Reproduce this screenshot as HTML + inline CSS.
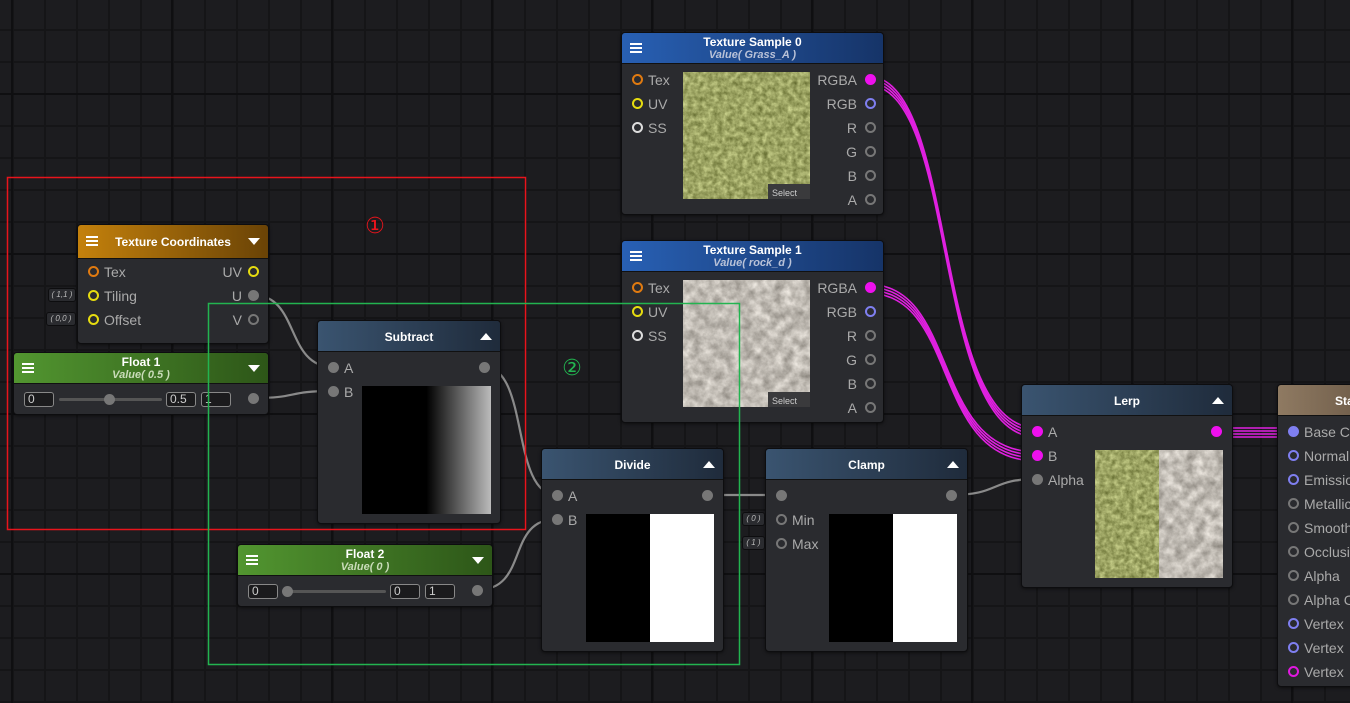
<!DOCTYPE html>
<html><head><meta charset="utf-8"><style>
*{box-sizing:border-box;margin:0;padding:0}
body{width:1350px;height:703px;overflow:hidden;position:relative;font-family:"Liberation Sans",sans-serif;
background-color:#1c1c1f;
background-image:
linear-gradient(90deg,#0f0f11 0,#0f0f11 2px,transparent 2px),
linear-gradient(0deg,#0f0f11 0,#0f0f11 2px,transparent 2px),
linear-gradient(90deg,#151517 0,#151517 2px,transparent 2px),
linear-gradient(0deg,#151517 0,#151517 2px,transparent 2px);
background-size:160px 160px,160px 160px,32px 32px,32px 32px;
background-position:171px 0,0 95px,12px 0,0 95px;}
.n{position:absolute;background:#2a2b2f;border:1px solid #0d0d0f;border-radius:4px;overflow:hidden;box-shadow:0 1px 3px #0008}
.h{height:31px;color:#fff;font-weight:bold;font-size:12px;text-align:center;position:relative;border-bottom:1px solid #111;white-space:nowrap}
.h .t{padding-top:9px}
.h .t2{padding-top:3px;line-height:13px}
.h .t2 i{display:block;font-weight:bold;font-size:11px;color:#b9c2d8}
.blu{background:linear-gradient(90deg,#2860b4,#163468)}
.dbl{background:linear-gradient(90deg,#3a5470,#1f2b3b)}
.grn{background:linear-gradient(90deg,#529630,#2d5618)}
.grn .t2 i{color:#c9dcb9}
.org{background:linear-gradient(90deg,#c4810c,#6a4306)}
.brn{background:linear-gradient(90deg,#8f7a62,#6e5c49)}
.mn{position:absolute;left:8px;top:10px;width:12px;height:10px;border-top:2px solid #fff;border-bottom:2px solid #fff}
.mn:after{content:"";position:absolute;left:0;right:0;top:2px;height:2px;background:#fff}
.up,.dn{position:absolute;right:8px;top:12px;width:0;height:0;border-left:6px solid transparent;border-right:6px solid transparent}
.up{border-bottom:7px solid #fff}
.dn{border-top:7px solid #fff}
.l{position:absolute;color:#aaa;font-size:14px;line-height:16px;white-space:nowrap}
.p{position:absolute;width:11px;height:11px;border-radius:50%;border:2px solid #777}
.f{background:#777;border-color:#777}
.o{border-color:#e07a10}.y{border-color:#e6dc10}.w{border-color:#ddd}.b{border-color:#7f7ff0}.m{border-color:#e018e0}
.mf{background:#ee10ee;border-color:#ee10ee}.bf{background:#7f7ff0;border-color:#7f7ff0}
.in{position:absolute;height:15px;border:1px solid #888;border-radius:3px;background:#1b1b1d;color:#ccc;font-size:12px;line-height:13px;padding-left:3px}
.tag{position:absolute;height:14px;border:1px solid #0d0d0f;border-radius:3px;background:#2a2b2f;color:#bbb;font-size:8px;font-style:italic;line-height:12px;text-align:center}
.abs{position:absolute}
</style></head><body>
<svg class="abs" style="left:0;top:0" width="1350" height="703">
<g fill="none" stroke="#8a8a8a" stroke-width="2.2">
<path d="M253 295 C300 295 285 367 333 367"/>
<path d="M253 398 C300 398 285 391 333 391"/>
<path d="M484 367 C530 367 510 495 557 495"/>
<path d="M477 590 C530 590 505 519 557 519"/>
<path d="M707 495 L781 495"/>
<path d="M951 495 C1000 495 990 479 1037 479"/>
</g>
<g fill="none" stroke="#e020e0" stroke-width="1.6">
<path d="M867 76 C960 76 930 428 1037 428"/><path d="M867 79 C960 79 930 431 1037 431"/><path d="M867 82 C960 82 930 434 1037 434"/><path d="M867 85 C960 85 930 437 1037 437"/>
<path d="M867 284 C960 284 930 452 1037 452"/><path d="M867 287 C960 287 930 455 1037 455"/><path d="M867 290 C960 290 930 458 1037 458"/><path d="M867 293 C960 293 930 461 1037 461"/>
<path d="M1216 428 L1293 428"/><path d="M1216 431 L1293 431"/><path d="M1216 434 L1293 434"/><path d="M1216 437 L1293 437"/>
</g>
<defs>
<filter id="grass" x="0" y="0" width="100%" height="100%" color-interpolation-filters="sRGB"><feTurbulence type="fractalNoise" baseFrequency="0.2" numOctaves="4" seed="3"/><feColorMatrix values="0.5 0 0 0 0.36  0.5 0 0 0 0.39  0.45 0 0 0 0.16  0 0 0 0 1"/></filter>
<filter id="rock" x="0" y="0" width="100%" height="100%" color-interpolation-filters="sRGB"><feTurbulence type="fractalNoise" baseFrequency="0.1" numOctaves="4" seed="7"/><feColorMatrix values="0.5 0 0 0 0.5  0.5 0 0 0 0.48  0.5 0 0 0 0.45  0 0 0 0 1"/></filter>
</defs>
</svg>

<!-- Texture Sample 0 -->
<div class="n" style="left:621px;top:32px;width:263px;height:183px">
<div class="h blu"><div class="mn"></div><div class="t2">Texture Sample 0<i>Value( Grass_A )</i></div></div>
<div class="p o" style="left:10px;top:41px"></div><div class="l" style="left:26px;top:39px">Tex</div>
<div class="p y" style="left:10px;top:65px"></div><div class="l" style="left:26px;top:63px">UV</div>
<div class="p w" style="left:10px;top:89px"></div><div class="l" style="left:26px;top:87px">SS</div>
<svg class="abs" style="left:61px;top:39px" width="127" height="127"><rect width="127" height="127" filter="url(#grass)"/><rect x="85" y="112" width="42" height="15" fill="#3a3a3c"/><text x="89" y="124" font-size="9" fill="#ccc" font-family="Liberation Sans">Select</text></svg>
<div class="l" style="right:26px;top:39px">RGBA</div><div class="p mf" style="right:7px;top:41px"></div>
<div class="l" style="right:26px;top:63px">RGB</div><div class="p b" style="right:7px;top:65px"></div>
<div class="l" style="right:26px;top:87px">R</div><div class="p" style="right:7px;top:89px"></div>
<div class="l" style="right:26px;top:111px">G</div><div class="p" style="right:7px;top:113px"></div>
<div class="l" style="right:26px;top:135px">B</div><div class="p" style="right:7px;top:137px"></div>
<div class="l" style="right:26px;top:159px">A</div><div class="p" style="right:7px;top:161px"></div>
</div>

<!-- Texture Sample 1 -->
<div class="n" style="left:621px;top:240px;width:263px;height:183px">
<div class="h blu"><div class="mn"></div><div class="t2">Texture Sample 1<i>Value( rock_d )</i></div></div>
<div class="p o" style="left:10px;top:41px"></div><div class="l" style="left:26px;top:39px">Tex</div>
<div class="p y" style="left:10px;top:65px"></div><div class="l" style="left:26px;top:63px">UV</div>
<div class="p w" style="left:10px;top:89px"></div><div class="l" style="left:26px;top:87px">SS</div>
<svg class="abs" style="left:61px;top:39px" width="127" height="127"><rect width="127" height="127" filter="url(#rock)"/><rect x="85" y="112" width="42" height="15" fill="#3a3a3c"/><text x="89" y="124" font-size="9" fill="#ccc" font-family="Liberation Sans">Select</text></svg>
<div class="l" style="right:26px;top:39px">RGBA</div><div class="p mf" style="right:7px;top:41px"></div>
<div class="l" style="right:26px;top:63px">RGB</div><div class="p b" style="right:7px;top:65px"></div>
<div class="l" style="right:26px;top:87px">R</div><div class="p" style="right:7px;top:89px"></div>
<div class="l" style="right:26px;top:111px">G</div><div class="p" style="right:7px;top:113px"></div>
<div class="l" style="right:26px;top:135px">B</div><div class="p" style="right:7px;top:137px"></div>
<div class="l" style="right:26px;top:159px">A</div><div class="p" style="right:7px;top:161px"></div>
</div>

<!-- Texture Coordinates -->
<div class="n" style="left:77px;top:224px;width:192px;height:120px">
<div class="h org" style="height:34px"><div class="mn" style="top:11px"></div><div class="t" style="padding-top:10px">Texture Coordinates</div><div class="dn" style="top:13px"></div></div>
<div class="p o" style="left:10px;top:41px"></div><div class="l" style="left:26px;top:39px">Tex</div>
<div class="p y" style="left:10px;top:65px"></div><div class="l" style="left:26px;top:63px">Tiling</div>
<div class="p y" style="left:10px;top:89px"></div><div class="l" style="left:26px;top:87px">Offset</div>
<div class="l" style="right:26px;top:39px">UV</div><div class="p y" style="right:9px;top:41px"></div>
<div class="l" style="right:26px;top:63px">U</div><div class="p f" style="right:9px;top:65px"></div>
<div class="l" style="right:26px;top:87px">V</div><div class="p" style="right:9px;top:89px"></div>
</div>
<div class="tag" style="left:48px;top:288px;width:28px">( 1,1 )</div>
<div class="tag" style="left:46px;top:312px;width:30px">( 0,0 )</div>

<!-- Float 1 -->
<div class="n" style="left:13px;top:352px;width:256px;height:63px">
<div class="h grn"><div class="mn"></div><div class="t2">Float 1<i>Value( 0.5 )</i></div><div class="dn"></div></div>
<div class="in" style="left:10px;top:39px;width:30px">0</div>
<div class="abs" style="left:45px;top:45px;width:103px;height:3px;background:#555;border-radius:2px"></div>
<div class="abs" style="left:90px;top:41px;width:11px;height:11px;background:#777;border-radius:50%"></div>
<div class="in" style="left:152px;top:39px;width:30px">0.5</div>
<div class="in" style="left:187px;top:39px;width:30px">1</div>
<div class="p f" style="right:9px;top:40px"></div>
</div>

<!-- Subtract -->
<div class="n" style="left:317px;top:320px;width:184px;height:204px">
<div class="h dbl"><div class="t">Subtract</div><div class="up"></div></div>
<div class="p f" style="left:10px;top:41px"></div><div class="l" style="left:26px;top:39px">A</div>
<div class="p f" style="left:10px;top:65px"></div><div class="l" style="left:26px;top:63px">B</div>
<div class="p f" style="right:10px;top:41px"></div>
<div class="abs" style="left:44px;top:65px;width:129px;height:128px;background:linear-gradient(90deg,#000 0,#000 50%,#bbb 100%)"></div>
</div>

<!-- Float 2 -->
<div class="n" style="left:237px;top:544px;width:256px;height:63px">
<div class="h grn"><div class="mn"></div><div class="t2">Float 2<i>Value( 0 )</i></div><div class="dn"></div></div>
<div class="in" style="left:10px;top:39px;width:30px">0</div>
<div class="abs" style="left:45px;top:45px;width:103px;height:3px;background:#555;border-radius:2px"></div>
<div class="abs" style="left:44px;top:41px;width:11px;height:11px;background:#777;border-radius:50%"></div>
<div class="in" style="left:152px;top:39px;width:30px">0</div>
<div class="in" style="left:187px;top:39px;width:30px">1</div>
<div class="p f" style="right:9px;top:40px"></div>
</div>

<!-- Divide -->
<div class="n" style="left:541px;top:448px;width:183px;height:204px">
<div class="h dbl"><div class="t">Divide</div><div class="up"></div></div>
<div class="p f" style="left:10px;top:41px"></div><div class="l" style="left:26px;top:39px">A</div>
<div class="p f" style="left:10px;top:65px"></div><div class="l" style="left:26px;top:63px">B</div>
<div class="p f" style="right:10px;top:41px"></div>
<div class="abs" style="left:44px;top:65px;width:128px;height:128px;background:linear-gradient(90deg,#000 50%,#fff 50%)"></div>
</div>

<!-- Clamp -->
<div class="n" style="left:765px;top:448px;width:203px;height:204px">
<div class="h dbl"><div class="t">Clamp</div><div class="up"></div></div>
<div class="p f" style="left:10px;top:41px"></div>
<div class="p" style="left:10px;top:65px"></div><div class="l" style="left:26px;top:63px">Min</div>
<div class="p" style="left:10px;top:89px"></div><div class="l" style="left:26px;top:87px">Max</div>
<div class="p f" style="right:10px;top:41px"></div>
<div class="abs" style="left:63px;top:65px;width:128px;height:128px;background:linear-gradient(90deg,#000 50%,#fff 50%)"></div>
</div>
<div class="tag" style="left:742px;top:512px;width:23px">( 0 )</div>
<div class="tag" style="left:742px;top:536px;width:23px">( 1 )</div>

<!-- Lerp -->
<div class="n" style="left:1021px;top:384px;width:212px;height:204px">
<div class="h dbl"><div class="t">Lerp</div><div class="up"></div></div>
<div class="p mf" style="left:10px;top:41px"></div><div class="l" style="left:26px;top:39px">A</div>
<div class="p mf" style="left:10px;top:65px"></div><div class="l" style="left:26px;top:63px">B</div>
<div class="p f" style="left:10px;top:89px"></div><div class="l" style="left:26px;top:87px">Alpha</div>
<div class="p mf" style="right:10px;top:41px"></div>
<svg class="abs" style="left:73px;top:65px" width="128" height="128"><rect width="64" height="128" filter="url(#grass)"/><rect x="64" width="64" height="128" filter="url(#rock)"/></svg>
</div>

<!-- Standard -->
<div class="n" style="left:1277px;top:384px;width:90px;height:303px">
<div class="h brn"><div class="t" style="text-align:left;padding-left:57px">Standard</div></div>
<div class="p bf" style="left:10px;top:41px"></div><div class="l" style="left:26px;top:39px">Base Color</div>
<div class="p b" style="left:10px;top:65px"></div><div class="l" style="left:26px;top:63px">Normal</div>
<div class="p b" style="left:10px;top:89px"></div><div class="l" style="left:26px;top:87px">Emission</div>
<div class="p" style="left:10px;top:113px"></div><div class="l" style="left:26px;top:111px">Metallic</div>
<div class="p" style="left:10px;top:137px"></div><div class="l" style="left:26px;top:135px">Smoothness</div>
<div class="p" style="left:10px;top:161px"></div><div class="l" style="left:26px;top:159px">Occlusion</div>
<div class="p" style="left:10px;top:185px"></div><div class="l" style="left:26px;top:183px">Alpha</div>
<div class="p" style="left:10px;top:209px"></div><div class="l" style="left:26px;top:207px">Alpha Clip</div>
<div class="p b" style="left:10px;top:233px"></div><div class="l" style="left:26px;top:231px">Vertex</div>
<div class="p b" style="left:10px;top:257px"></div><div class="l" style="left:26px;top:255px">Vertex</div>
<div class="p m" style="left:10px;top:281px"></div><div class="l" style="left:26px;top:279px">Vertex</div>
</div>

<svg class="abs" style="left:0;top:0" width="1350" height="703">
<rect x="7.5" y="177.5" width="518" height="352" fill="none" stroke="#e8141c" stroke-width="1.5"/>
<rect x="208.5" y="303.5" width="531" height="361" fill="none" stroke="#22b450" stroke-width="1.5"/>
<text x="375" y="233" font-size="22" fill="#e8141c" text-anchor="middle" font-family="DejaVu Sans">①</text>
<text x="572" y="375" font-size="22" fill="#22b450" text-anchor="middle" font-family="DejaVu Sans">②</text>
</svg>
</body></html>
